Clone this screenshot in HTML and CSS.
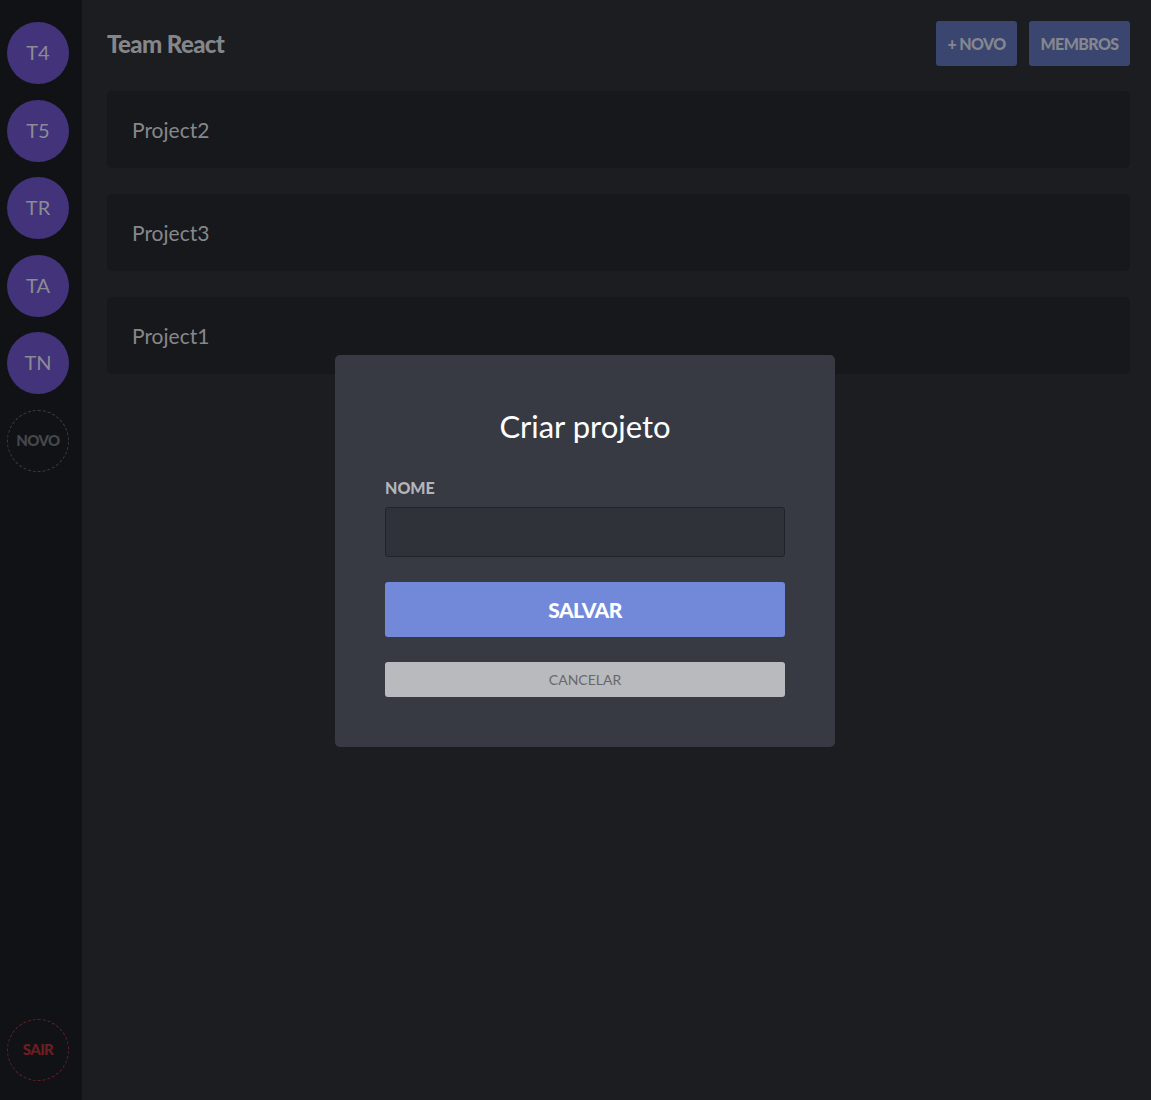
FILE: index.html
```html
<!DOCTYPE html>
<html lang="pt">
<head>
<meta charset="utf-8">
<title>Team React</title>
<link rel="stylesheet" href="styles.css">
</head>
<body>
<div class="app">
  <nav class="sidebar">
    <div class="teams">
      <div class="team">T4</div>
      <div class="team">T5</div>
      <div class="team">TR</div>
      <div class="team">TA</div>
      <div class="team">TN</div>
      <div class="team team-new">NOVO</div>
    </div>
    <div class="team team-exit">SAIR</div>
  </nav>
  <main class="main">
    <header class="header">
      <h1 class="title">Team React</h1>
      <div class="actions">
        <button class="btn-top btn-new">+ NOVO</button>
        <button class="btn-top btn-members">MEMBROS</button>
      </div>
    </header>
    <ul class="projects">
      <li class="project">Project2</li>
      <li class="project">Project3</li>
      <li class="project">Project1</li>
    </ul>
  </main>
  <div class="modal">
    <h2 class="modal-title">Criar projeto</h2>
    <label class="field-label" for="nome">NOME</label>
    <input class="field-input" id="nome" type="text">
    <button class="btn-save">SALVAR</button>
    <button class="btn-cancel">CANCELAR</button>
  </div>
</div>
</body>
</html>
```
FILE: styles.css
```css
* { box-sizing: border-box; }
html, body { margin: 0; padding: 0; height: 100%; }
body {
  font-family: "Lato", "Open Sans", sans-serif;
  background: #1c1d21;
}
.app {
  display: flex;
  min-height: 1100px;
  position: relative;
}
.sidebar {
  width: 82px;
  flex: 0 0 82px;
  background: #111215;
  display: flex;
  flex-direction: column;
  justify-content: space-between;
  align-items: flex-start;
  padding: 22px 0 19px 7px;
}
.teams {
  display: flex;
  flex-direction: column;
  gap: 15.5px;
}
.team {
  width: 62px;
  height: 62px;
  border-radius: 50%;
  background: #43337a;
  color: #8b8b95;
  display: flex;
  align-items: center;
  justify-content: center;
  font-size: 20px;
  padding-bottom: 2px;
}
.team-new {
  background: transparent;
  border: 1px dashed #3e3f44;
  color: #46474c;
  font-size: 15px;
  font-weight: 900;
  letter-spacing: -0.6px;
}
.team-exit {
  background: transparent;
  border: 1px dashed #6b1f25;
  color: #6f1d23;
  font-size: 15px;
  font-weight: 900;
  letter-spacing: -0.6px;
}
.main {
  flex: 1;
  padding: 21px 21px 0 25px;
}
.header {
  display: flex;
  justify-content: space-between;
  align-items: center;
  height: 45px;
  margin-bottom: 25px;
}
.title {
  margin: 0;
  font-size: 24px;
  font-weight: 900;
  color: #85868a;
  letter-spacing: -0.6px;
}
.actions {
  display: flex;
  gap: 12px;
}
.btn-top {
  height: 45px;
  border: 0;
  border-radius: 3px;
  background: #3a4570;
  color: #85878f;
  font-family: inherit;
  font-size: 16px;
  font-weight: 900;
  letter-spacing: -0.6px;
  padding: 0;
  white-space: nowrap;
}
.btn-new { width: 81px; }
.btn-members { width: 101px; }
.projects {
  list-style: none;
  margin: 0;
  padding: 0;
  display: flex;
  flex-direction: column;
  gap: 26px;
}
.project {
  height: 77px;
  background: #17181b;
  border-radius: 5px;
  color: #86878b;
  font-size: 21px;
  display: flex;
  align-items: center;
  padding-left: 25px;
}
.modal {
  position: absolute;
  left: 335px;
  top: 355px;
  width: 500px;
  height: 392px;
  background: #373a43;
  border-radius: 5px;
  padding: 49px 50px 0;
  display: flex;
  flex-direction: column;
}
.modal-title {
  margin: 0 0 31px;
  text-align: center;
  color: #ffffff;
  font-size: 31px;
  font-weight: 400;
  line-height: 44px;
}
.field-label {
  color: #b4b5b9;
  font-size: 16px;
  font-weight: 900;
  margin-bottom: 10px;
  line-height: 18px;
}
.field-input {
  height: 50px;
  background: #30323a;
  border: 1px solid #222328;
  border-radius: 3px;
  margin-bottom: 25px;
}
.btn-save {
  height: 55px;
  border: 0;
  border-radius: 3px;
  background: #7289da;
  color: #ffffff;
  font-family: inherit;
  font-size: 21px;
  font-weight: 900;
  letter-spacing: -0.6px;
  margin-bottom: 25px;
}
.btn-cancel {
  height: 35px;
  border: 0;
  border-radius: 3px;
  background: #b9babd;
  color: #67686c;
  font-family: inherit;
  font-size: 14px;
}
```
